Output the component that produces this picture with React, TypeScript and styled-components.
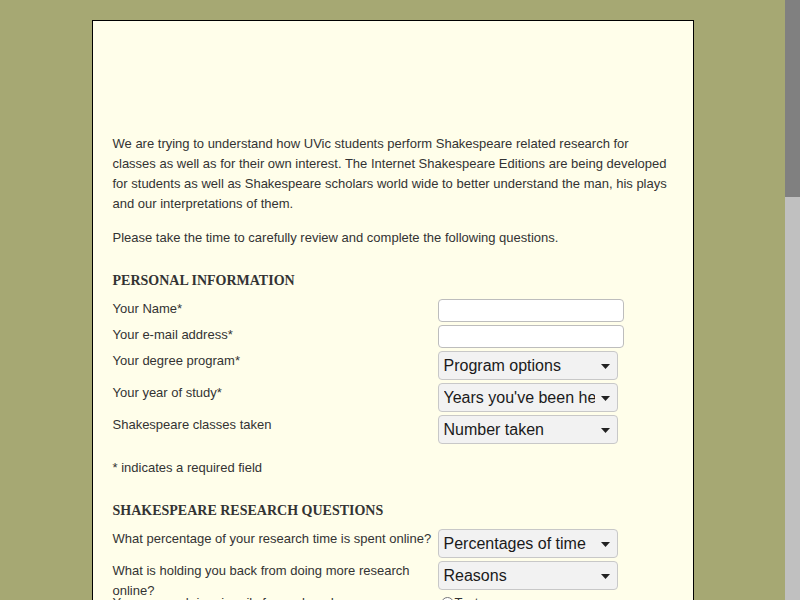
import React from "react"
import styled, { createGlobalStyle } from "styled-components"

const GlobalStyle = createGlobalStyle`
  html, body {
    margin: 0;
    padding: 0;
    background: #a6a873;
  }
  body {
    padding: 20px 15px 40px 0;
    font-family: "Liberation Sans", Arial, sans-serif;
  }
`

// the page's own scrollbar, drawn as it shows in the reference
const ScrollRail = styled.div`
  position: fixed;
  top: 0;
  right: 0;
  width: 15px;
  height: 100vh;
  background: #c0c0c0;
`

const ScrollThumb = styled.div`
  height: 197px;
  background: #808080;
`

const Page = styled.div`
  width: 602px;
  min-height: 1740px;
  margin: 0 auto;
  background: #fffeea;
  border: 1px solid #000;
  padding: 0 20px 30px;
  box-sizing: border-box;
  color: #333;
  font-size: 13px;
  line-height: 20px;
`

const Banner = styled.div`
  height: 113px;
`

const Intro = styled.p`
  margin: 0 0 14px;
`

const SectionTitle = styled.h2`
  margin: 23px 0 8px;
  font-family: "Liberation Serif", "Times New Roman", serif;
  font-size: 14px;
  line-height: 20px;
  font-weight: bold;
  text-transform: uppercase;
  color: #333;
`

const Row = styled.div<{ $h: number }>`
  display: grid;
  grid-template-columns: 325px 1fr;
  height: ${(p) => p.$h}px;
  margin-bottom: 3px;
`

const Label = styled.label`
  display: block;
  line-height: 20px;
`

const TextInput = styled.input`
  width: 186px;
  height: 23px;
  box-sizing: border-box;
  border: 1px solid #bdbdbd;
  border-radius: 4px;
  background: #fff;
  font: 14px "Liberation Sans", Arial, sans-serif;
  padding: 0 5px;
`

const SelectWrap = styled.div`
  position: relative;
  width: 180px;
  height: 29px;
`

const Select = styled.select`
  appearance: none;
  width: 100%;
  height: 29px;
  box-sizing: border-box;
  border: 1px solid #c8c8c8;
  border-radius: 4px;
  background: #f2f2f2;
  color: #1a1a1a;
  font: 16px "Liberation Sans", Arial, sans-serif;
  padding: 0 22px 0 5px;
  white-space: nowrap;
  overflow: hidden;
`

const Arrow = styled.svg`
  position: absolute;
  right: 8px;
  top: 13px;
  pointer-events: none;
`

const Note = styled.p`
  margin: 14px 0 23px;
`

const RadioGroup = styled.div`
  display: flex;
  flex-direction: column;
  gap: 2px;
  padding-top: 1px;
`

const RadioOption = styled.label`
  display: flex;
  align-items: center;
  font-size: 13px;
  line-height: 18px;

  input {
    margin: 0 1px 0 3px;
  }
`

const TextArea = styled.textarea`
  width: 186px;
  height: 60px;
  box-sizing: border-box;
  border: 1px solid #bdbdbd;
  border-radius: 4px;
  background: #fff;
`

const Submit = styled.button`
  margin-top: 20px;
  font: 14px "Liberation Sans", Arial, sans-serif;
  padding: 4px 14px;
  border: 1px solid #bdbdbd;
  border-radius: 4px;
  background: #f2f2f2;
`

function Dropdown({ placeholder }: { placeholder: string }) {
  return (
    <SelectWrap>
      <Select defaultValue="">
        <option value="">{placeholder}</option>
      </Select>
      <Arrow width="9" height="5" viewBox="0 0 9 5">
        <path d="M0 0h9L4.5 5z" fill="#222" />
      </Arrow>
    </SelectWrap>
  )
}

function Radios({ name, options }: { name: string; options: string[] }) {
  return (
    <RadioGroup>
      {options.map((o) => (
        <RadioOption key={o}>
          <input type="radio" name={name} />
          {o}
        </RadioOption>
      ))}
    </RadioGroup>
  )
}

export default function App() {
  return (
    <>
      <GlobalStyle />
      <ScrollRail>
        <ScrollThumb />
      </ScrollRail>
      <Page>
        <Banner />
        <Intro>
          We are trying to understand how UVic students perform Shakespeare related research for
          classes as well as for their own interest. The Internet Shakespeare Editions are being
          developed for students as well as Shakespeare scholars world wide to better understand
          the man, his plays and our interpretations of them.
        </Intro>
        <Intro>Please take the time to carefully review and complete the following questions.</Intro>

        <SectionTitle>Personal Information</SectionTitle>
        <Row $h={23}>
          <Label>Your Name*</Label>
          <TextInput type="text" />
        </Row>
        <Row $h={23}>
          <Label>Your e-mail address*</Label>
          <TextInput type="text" />
        </Row>
        <Row $h={29}>
          <Label>Your degree program*</Label>
          <Dropdown placeholder="Program options" />
        </Row>
        <Row $h={29}>
          <Label>Your year of study*</Label>
          <Dropdown placeholder="Years you've been here" />
        </Row>
        <Row $h={29}>
          <Label>Shakespeare classes taken</Label>
          <Dropdown placeholder="Number taken" />
        </Row>
        <Note>* indicates a required field</Note>

        <SectionTitle>Shakespeare Research Questions</SectionTitle>
        <Row $h={29}>
          <Label>What percentage of your research time is spent online?</Label>
          <Dropdown placeholder="Percentages of time" />
        </Row>
        <Row $h={29}>
          <Label>What is holding you back from doing more research online?</Label>
          <Dropdown placeholder="Reasons" />
        </Row>
        <Row $h={62}>
          <Label>Your research is primarily for work and</Label>
          <Radios name="purpose" options={["Text", "Performance", "Both"]} />
        </Row>
        <Row $h={29}>
          <Label>Which online resources do you use most?</Label>
          <Dropdown placeholder="Resources" />
        </Row>
        <Row $h={29}>
          <Label>How often do you visit the ISE site?</Label>
          <Dropdown placeholder="Frequency" />
        </Row>
        <Row $h={62}>
          <Label>Do you use the annotated texts?</Label>
          <Radios name="annotated" options={["Yes", "No", "Sometimes"]} />
        </Row>
        <Row $h={62}>
          <Label>What would you like to see added to the site?</Label>
          <TextArea />
        </Row>
        <Row $h={62}>
          <Label>Any other comments?</Label>
          <TextArea />
        </Row>
        <Submit type="button">Submit</Submit>
      </Page>
    </>
  )
}
